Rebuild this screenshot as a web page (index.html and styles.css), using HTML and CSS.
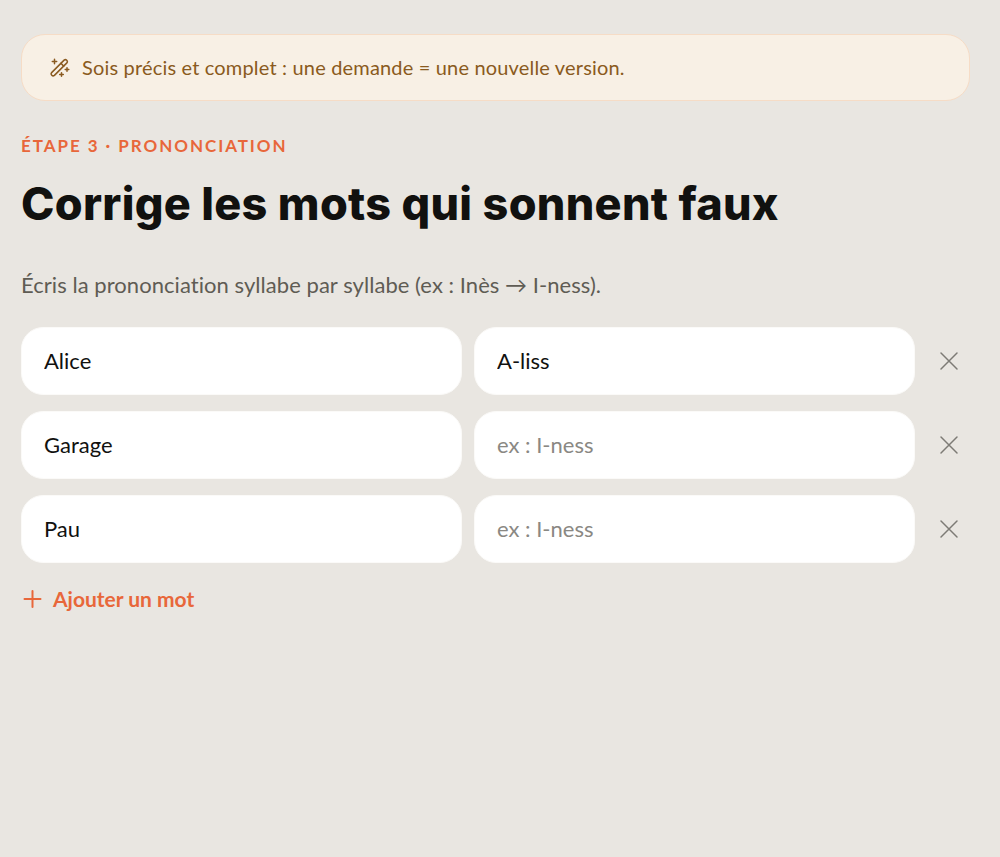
FILE: index.html
```html
<!DOCTYPE html>
<html lang="fr">
<head>
<meta charset="UTF-8">
<meta name="viewport" content="width=device-width, initial-scale=1.0">
<title>Prononciation</title>
<link rel="stylesheet" href="styles.css">
</head>
<body>

<main class="page">
  <div class="notice">
    <svg class="notice-icon" viewBox="0 0 20 20" fill="none" stroke="currentColor" stroke-width="1.5" stroke-linecap="round" stroke-linejoin="round">
      <path d="M1.6 14.6 14.1 2.1a2 2 0 0 1 2.8 2.8L4.4 17.4a2 2 0 0 1-2.8-2.8Z"/>
      <path d="m10.9 5.3 2.8 2.8"/>
      <path d="M4.5 1.3v4.4M2.3 3.5h4.4"/>
      <path d="M17 9.7v3.6M15.2 11.5h3.6"/>
      <path d="M11.5 14.7v3.6M9.7 16.5h3.6"/>
    </svg>
    <span class="notice-text">Sois précis et complet : une demande = une nouvelle version.</span>
  </div>

  <p class="step">ÉTAPE 3 · PRONONCIATION</p>
  <h1>Corrige les mots qui sonnent faux</h1>
  <p class="intro">Écris la prononciation syllabe par syllabe (ex : Inès → I-ness).</p>

  <div class="words">
    <div class="word-row">
      <input class="field" type="text" value="Alice">
      <input class="field" type="text" value="A-liss" placeholder="ex : I-ness">
      <button class="remove" aria-label="Supprimer">
        <svg viewBox="0 0 20 20" fill="none" stroke="currentColor" stroke-width="1.5" stroke-linecap="round"><path d="M2 2l16 16M18 2 2 18"/></svg>
      </button>
    </div>
    <div class="word-row">
      <input class="field" type="text" value="Garage">
      <input class="field" type="text" placeholder="ex : I-ness">
      <button class="remove" aria-label="Supprimer">
        <svg viewBox="0 0 20 20" fill="none" stroke="currentColor" stroke-width="1.5" stroke-linecap="round"><path d="M2 2l16 16M18 2 2 18"/></svg>
      </button>
    </div>
    <div class="word-row">
      <input class="field" type="text" value="Pau">
      <input class="field" type="text" placeholder="ex : I-ness">
      <button class="remove" aria-label="Supprimer">
        <svg viewBox="0 0 20 20" fill="none" stroke="currentColor" stroke-width="1.5" stroke-linecap="round"><path d="M2 2l16 16M18 2 2 18"/></svg>
      </button>
    </div>
  </div>

  <button class="add-word">
    <svg viewBox="0 0 20 20" fill="none" stroke="currentColor" stroke-width="2" stroke-linecap="round"><path d="M9.5 2v16M1.5 10h16"/></svg>
    Ajouter un mot
  </button>
</main>

</body>
</html>
```

FILE: styles.css
```css
* {
  box-sizing: border-box;
}
html, body {
  margin: 0;
  height: 100%;
}
body {
  background: #e9e6e1;
  font-family: "Lato", "Noto Sans", sans-serif;
  font-variant-ligatures: none;
  overflow: hidden;
}
.page {
  padding: 34px 30px 0 21px;
}
.notice {
  display: flex;
  align-items: center;
  gap: 12px;
  height: 67px;
  padding: 0 28px;
  background: #f8f0e5;
  border: 1px solid #f6dcc6;
  border-radius: 24px;
  color: #8a5a20;
  font-size: 20px;
  letter-spacing: 0.17px;
}
.notice-icon {
  width: 20px;
  height: 20px;
  flex: none;
}
.notice-text {
  padding-bottom: 2px;
}
.step {
  margin: 35px 0 0;
  color: #e8673a;
  font-size: 17px;
  font-weight: 700;
  line-height: 20px;
  letter-spacing: 1.95px;
}
h1 {
  margin: 21px 0 0;
  color: #11110f;
  font-family: "Inter", sans-serif;
  font-size: 45px;
  font-weight: 800;
  line-height: 54px;
  letter-spacing: 0.3px;
}
.intro {
  margin: 40px 0 0;
  color: #5f5c54;
  font-size: 22px;
  line-height: 28px;
  letter-spacing: 0.05px;
}
.words {
  display: flex;
  flex-direction: column;
  gap: 16px;
  margin-top: 28px;
}
.word-row {
  display: grid;
  grid-template-columns: 441px 441px 1fr;
  column-gap: 12px;
  align-items: center;
}
.field {
  height: 68px;
  padding: 0 22px 2px;
  background: #fff;
  border: 1px solid #fbfaf8;
  border-radius: 22px;
  color: #11110f;
  font-family: inherit;
  font-size: 22px;
  outline: none;
}
.field::placeholder {
  color: #8a8883;
  opacity: 1;
}
.remove {
  justify-self: center;
  display: flex;
  width: 20px;
  height: 20px;
  padding: 0;
  background: none;
  border: none;
  color: #7d7b75;
  cursor: pointer;
}
.remove svg {
  width: 20px;
  height: 20px;
}
.add-word {
  display: flex;
  align-items: center;
  gap: 10px;
  margin-top: 24px;
  padding: 0 0 0 2px;
  background: none;
  border: none;
  color: #e8673a;
  font-family: inherit;
  font-size: 21px;
  font-weight: 700;
  line-height: 24px;
  cursor: pointer;
}
.add-word svg {
  width: 20px;
  height: 20px;
}
```
